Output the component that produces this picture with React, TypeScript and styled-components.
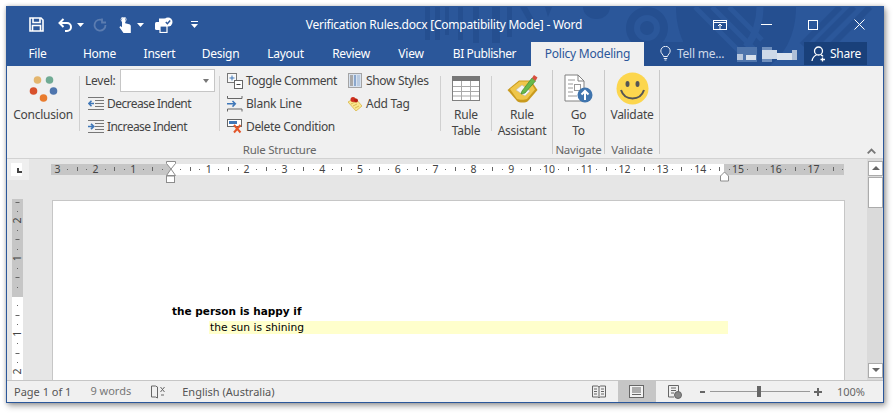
import React from "react";
import styled, { createGlobalStyle } from "styled-components";

const Global = createGlobalStyle`
  html, body { margin: 0; padding: 0; background: #fff; width: 893px; height: 413px; overflow: hidden; }
  body { font-family: "Noto Sans", "Open Sans", sans-serif; }
`;

const Window = styled.div`
  width: 878px; height: 397px; margin: 6px 0 0 6px; box-sizing: border-box;
  border: 1px solid #2b579a; display: flex; flex-direction: column; background: #f0f0f0;
  box-shadow: 2px 3px 6px rgba(0,0,0,.35), 0 0 4px rgba(0,0,0,.2); overflow: hidden;
`;
const Header = styled.header`
  position: relative; height: 59px; flex: none; background: #2b579a; color: #fff;
`;
const Pattern = styled.svg`position: absolute; left: 0; top: 0;`;
const TitleBar = styled.div`
  position: relative; height: 35px; display: grid; grid-template-columns: 1fr auto 1fr; align-items: center;
`;
const Qat = styled.div`display: flex; align-items: center; padding-left: 22px; height: 100%;`;
const QatSlot = styled.span<{ $w: number }>`width: ${p => p.$w}px; display: flex; align-items: center;`;
const Title = styled.div`font-size: 12px; letter-spacing: -.02em; color: #fff; white-space: nowrap; margin-top: -1px; position: relative; left: -1px;`;
const Controls = styled.div`display: flex; justify-content: flex-end; align-items: center; height: 100%; padding-right: 18px;`;
const ControlSlot = styled.span<{ $w: number }>`width: ${p => p.$w}px; display: flex; justify-content: flex-end;`;
const TabBar = styled.nav`position: relative; height: 24px; display: flex; align-items: stretch;`;
const Tab = styled.div<{ $w: number; $active?: boolean; $ls?: number }>`
  width: ${p => p.$w}px; flex: none; display: flex; align-items: center; justify-content: center;
  font-size: 12px; letter-spacing: ${p => p.$ls ?? -0.24}px; padding-bottom: 1px; box-sizing: border-box;
  color: ${p => (p.$active ? "#2b579a" : "#fff")}; background: ${p => (p.$active ? "#f0f0f0" : "transparent")};
`;
const TellMe = styled.div`margin-left: 16px; display: flex; align-items: center; gap: 6px; font-size: 12px; letter-spacing: -.02em; color: #ced8e8; padding-bottom: 1px;`;
const Blur = styled.svg`margin-left: 13px; align-self: center; flex: none;`;
const Share = styled.div`
  margin-left: auto; margin-right: 16px; width: 63px; height: 23px; background: #19407a; display: flex; align-items: center;
  gap: 4px; padding-left: 7px; box-sizing: border-box; font-size: 12px; letter-spacing: -.02em; color: #fff;
`;
const Ribbon = styled.section`
  position: relative; height: 93px; flex: none; background: #f0f0f0; border-bottom: 1px solid #d2d2d2; box-sizing: border-box;
  display: flex; align-items: flex-start; padding-top: 4px; color: #444; font-size: 12px; letter-spacing: -.02em;
`;
const Group = styled.div<{ $w: number }>`
  width: ${p => p.$w}px; height: 84px; flex: none; box-sizing: border-box; border-right: 1px solid #c9c9c9; display: flex; flex-direction: column;
`;
const GroupBody = styled.div`height: 74px; display: flex; flex: none;`;
const GroupLabel = styled.div`height: 12px; line-height: 12px; text-align: center; color: #666; font-size: 11.5px; white-space: nowrap;`;
const Large = styled.div<{ $w: number }>`
  width: ${p => p.$w}px; flex: none; display: flex; flex-direction: column; align-items: center; line-height: 16px; text-align: center; white-space: nowrap;
`;
const IconBox = styled.div`height: 37px; display: flex; align-items: center; justify-content: center; flex: none;`;
const Divider = styled.div`width: 1px; height: 55px; margin-top: 6px; background: #d0d0d0; flex: none;`;
const SmallCol = styled.div<{ $w: number; $ml?: number }>`width: ${p => p.$w}px; margin-left: ${p => p.$ml ?? 0}px; flex: none; display: flex; flex-direction: column; margin-top: -1px;`;
const SmallRow = styled.div<{ $gap?: number; $pl?: number; $ls?: number }>`
  height: 23px; display: flex; align-items: center; gap: ${p => p.$gap ?? 3}px; padding-left: ${p => p.$pl ?? 0}px; white-space: nowrap;
  letter-spacing: ${p => p.$ls ?? -0.24}px;
`;
const Combo = styled.div`
  width: 95px; height: 23px; box-sizing: border-box; background: #fff; border: 1px solid #c6c6c6; margin-left: 1px; position: relative;
  &::after { content: ""; position: absolute; right: 5px; top: 9px; border: 3.5px solid transparent; border-top: 4px solid #777; border-bottom: 0; }
`;
const Collapse = styled.svg`position: absolute; right: 7px; bottom: 4px;`;
const Workspace = styled.main`flex: 1; min-height: 0; display: flex; background: #e6e6e6;`;
const DocColumn = styled.div`flex: 1; min-width: 0; display: flex; flex-direction: column;`;
const RulerRow = styled.div`height: 40px; flex: none; display: flex; align-items: flex-start;`;
const Corner = styled.div`
  width: 22px; height: 21px; background: #efefef; flex: none; box-sizing: border-box; padding: 4px 0 0 4px;
`;
const CornerInner = styled.div`
  width: 11px; height: 13px; background: #fff; position: relative;
  &::after { content: ""; position: absolute; left: 6px; top: 5px; width: 3px; height: 3px; border-left: 2px solid #444; border-bottom: 2px solid #444; }
`;
const HRuler = styled.svg`margin: 2px 0 0 22px; flex: none; overflow: visible;`;
const PageRow = styled.div`flex: 1; min-height: 0; display: flex;`;
const VRuler = styled.svg`margin: 0 0 0 5px; flex: none; overflow: visible;`;
const Page = styled.article`
  margin: 1px 0 0 29px; width: 793px; flex: none; box-sizing: border-box; background: #fff; border: 1px solid #c6c6c6; border-bottom: 0;
  padding: 102px 0 0 119px; font-family: "DejaVu Sans", Verdana, sans-serif; font-size: 11px; color: #000;
`;
const Heading = styled.div`font-weight: 700; height: 17px; line-height: 17px; font-size: 10.5px;`;
const Highlight = styled.div`margin: 1px 0 0 37px; width: 519px; height: 13px; line-height: 13px; background: #ffffcc; padding-left: 1px; box-sizing: border-box; font-size: 10.7px;`;
const Scrollbar = styled.aside`
  width: 16px; flex: none; background: #dadada; display: flex; flex-direction: column; align-items: center; padding: 2px 0 2px; box-sizing: border-box;
`;
const ScrollBtn = styled.div<{ $down?: boolean }>`
  width: 15px; height: 15px; background: #fff; border: 1px solid #ababab; box-sizing: border-box; flex: none; position: relative;
  ${p => (p.$down ? "margin-top: auto;" : "")}
  &::after { content: ""; position: absolute; left: 3px; top: 4px; border: 4px solid transparent;
    ${p => (p.$down ? "border-top: 4px solid #666; border-bottom: 0;" : "border-bottom: 4px solid #666; border-top: 0;")} }
`;
const Thumb = styled.div`width: 15px; height: 31px; margin-top: 1px; background: #fff; border: 1px solid #ababab; box-sizing: border-box; flex: none;`;
const Status = styled.footer`
  height: 22px; flex: none; box-sizing: border-box; background: #f0f0f0; border-top: 1px solid #c6c6c6; display: flex; align-items: center;
  font-size: 11px; color: #555; position: relative;
`;
const StatusText = styled.span<{ $ml: number; $muted?: boolean }>`
  margin-left: ${p => p.$ml}px; white-space: nowrap; color: ${p => (p.$muted ? "#777" : "#555")}; ${p => (p.$muted ? "margin-top:-2px;" : "")}
`;
const StatusIcon = styled.svg<{ $ml: number }>`margin-left: ${p => p.$ml}px; flex: none;`;
const ViewActive = styled.div`margin-left: 12px; width: 38px; height: 21px; background: #c6c6c6; display: flex; align-items: center; justify-content: center; flex: none;`;
const Zoom = styled.div`margin-left: 18px; display: flex; align-items: center; flex: none;`;
const Track = styled.div`width: 100px; height: 1px; background: #999; margin: 0 4px 0 5px; position: relative;`;
const Knob = styled.div`position: absolute; left: 47px; top: -5px; width: 4px; height: 11px; background: #666;`;
const Percent = styled.span`margin-left: auto; margin-right: 18px; color: #666;`;

const W = "#fff";
const SaveIcon = () => (
  <svg width="15" height="15" viewBox="0 0 15 15" fill="none" stroke={W} strokeWidth="1.6">
    <path d="M1 1h11l2 2v11H1z" /><path d="M4 1v4.5h7V1" /><path d="M3.5 14V8.5h8V14" />
  </svg>
);
const UndoIcon = () => (
  <svg width="15" height="14" viewBox="0 0 15 14" fill="none" stroke={W} strokeWidth="2">
    <path d="M5.5 1 1.5 5l4 4" /><path d="M2 5h7a4 4 0 0 1 4 4v0a4 4 0 0 1-4 4H7" />
  </svg>
);
const RedoIcon = () => (
  <svg width="14" height="14" viewBox="0 0 14 14" fill="none" stroke="#5b7cb0" strokeWidth="1.8">
    <path d="M9.5 2.2A5.5 5.5 0 1 0 12.5 7" /><path d="M9 .5v4h4" />
  </svg>
);
const TouchIcon = () => (
  <svg width="12" height="16" viewBox="0 0 12 16" fill={W}>
    <path d="M3 2a1.6 1.6 0 0 1 3.2 0v4.2l4 1.1c1 .3 1.6 1 1.6 2V16H4.5L.4 10.2l1-1.1L3 10.300z" />
    <circle cx="4.600" cy="2.500" r="2.500" fill="none" stroke={W} strokeWidth=".8" />
  </svg>
);
const Caret = () => (
  <svg width="7" height="4" viewBox="0 0 7 4"><path d="M0 0h7L3.500 4z" fill={W} /></svg>
);
const PrintCheck = () => (
  <svg width="18" height="16" viewBox="0 0 18 16">
    <rect x="0" y="5" width="12" height="8" rx="1.500" fill={W} />
    <rect x="5" y="9" width="7" height="6.500" fill="#2b579a" stroke={W} strokeWidth="1.200" />
    <rect x="4" y="1.500" width="6" height="4" fill={W} />
    <circle cx="13" cy="5" r="4.500" fill={W} />
    <path d="M10.800 5l1.600 1.700 2.800-3.200" stroke="#2b579a" strokeWidth="1.400" fill="none" />
  </svg>
);
const Customize = () => (
  <svg width="7" height="7" viewBox="0 0 7 7"><path d="M0 .5h7" stroke={W} /><path d="M0 3h7L3.500 7z" fill={W} /></svg>
);
const Restore = () => (
  <svg width="14" height="10" viewBox="0 0 14 10" fill="none" stroke={W}>
    <rect x=".5" y=".5" width="13" height="9" /><path d="M1 2.500h12" /><path d="M7 9V4M5 6l2-2 2 2" />
  </svg>
);
const Minimize = () => (<svg width="11" height="1" viewBox="0 0 11 1"><rect width="11" height="1" fill={W} /></svg>);
const Maximize = () => (<svg width="10" height="10" viewBox="0 0 10 10" fill="none" stroke={W}><rect x=".5" y=".5" width="9" height="9" /></svg>);
const Close = () => (<svg width="11" height="11" viewBox="0 0 11 11" stroke={W} fill="none"><path d="M.5.5l10 10M10.500.5l-10 10" /></svg>);
const Bulb = () => (
  <svg width="11" height="15" viewBox="0 0 11 15" fill="none" stroke="#e8edf5" strokeWidth="1">
    <path d="M3.500 10.500C3.300 8.500.8 7.500.8 5a4.700 4.700 0 0 1 9.400 0c0 2.500-2.500 3.500-2.700 5.500z" />
    <path d="M3.800 12.500h3.400M4.500 14h2" />
  </svg>
);
const ShareIcon = () => (
  <svg width="15" height="16" viewBox="0 0 15 16" fill="none" stroke={W} strokeWidth="1.300">
    <circle cx="7.500" cy="5" r="4" /><path d="M1 15c.5-3 2-5 4.500-6M10 8.800c.8.400 1.500.9 2 1.600" />
    <path d="M11.500 11.500v4M9.500 13.500h4.500" />
  </svg>
);
const ConclusionIcon = () => (
  <svg width="30" height="26" viewBox="0 0 30 26">
    <circle cx="9.500" cy="4" r="3.800" fill="#e4b66e" />
    <circle cx="21.500" cy="4" r="3.800" fill="#70ab94" />
    <circle cx="5.500" cy="15" r="3.800" fill="#d8512c" />
    <circle cx="25.500" cy="15" r="3.800" fill="#4f76ae" />
    <circle cx="15.500" cy="22" r="3.800" fill="#e97c2e" />
  </svg>
);
const IndentIcon = ({ right }: { right?: boolean }) => (
  <svg width="16" height="13" viewBox="0 0 16 13" fill="none">
    <path d="M0 .5h16M7 3.500h9M7 6.500h9M7 9.500h9M0 12.500h16" stroke="#777" />
    {right
      ? <path d="M0 6.500h5M3 3.800l2.800 2.700L3 9.200" stroke="#3f77b8" strokeWidth="1.600" />
      : <path d="M6 6.500H1M3.500 3.800.8 6.500l2.700 2.700" stroke="#3f77b8" strokeWidth="1.600" />}
  </svg>
);
const ToggleIcon = () => (
  <svg width="16" height="16" viewBox="0 0 16 16" fill="none">
    <rect x=".5" y=".5" width="9" height="9" stroke="#777" fill="#f8f8f8" />
    <path d="M5 2.500v5M2.500 5h5" stroke="#3f77b8" />
    <rect x="7.500" y="7.500" width="8" height="8" stroke="#666" fill="#fff" />
    <path d="M9.500 11.500h4" stroke="#444" />
  </svg>
);
const BlankIcon = () => (
  <svg width="16" height="16" viewBox="0 0 16 16" fill="none">
    <path d="M.5 0v2.500h14.500V0M.5 15.500v-2.500H15v2.500" stroke="#666" />
    <path d="M0 7.800h8M5.500 5 8.300 7.800 5.500 10.600" stroke="#3f77b8" strokeWidth="1.500" />
  </svg>
);
const DeleteIcon = () => (
  <svg width="16" height="15" viewBox="0 0 16 15" fill="none">
    <rect x=".5" y=".5" width="14" height="7" stroke="#666" fill="#fff" />
    <rect x="2" y="2" width="8" height="3" fill="#3f77b8" />
    <path d="M7 6l6.500 7.500M13.500 6 7 13.500" stroke="#e2562a" strokeWidth="2" />
  </svg>
);
const StylesIcon = () => (
  <svg width="14" height="15" viewBox="0 0 14 15">
    <rect x=".5" y=".5" width="13" height="14" fill="#d8e2ee" stroke="#a4a4a4" />
    <rect x="2" y="2" width="3" height="11" fill="#a8a8a8" />
    <rect x="6" y="2" width="2" height="11" fill="#8aa7cc" />
    <rect x="9" y="2" width="3" height="11" fill="#b9cbe1" />
  </svg>
);
const TagIcon = () => (
  <svg width="14" height="15" viewBox="0 0 14 15">
    <path d="M0 6 7 2l7 8-6 5z" fill="#fbe88f" stroke="#d9b64a" strokeWidth=".8" />
    <path d="M3 8l4-2M5 10l4-2M7 12l4-2" stroke="#caa53a" strokeWidth=".7" />
    <circle cx="5" cy="3.500" r="2.500" fill="#cf2f1f" />
    <circle cx="8" cy="4.500" r="2" fill="#b51f12" />
  </svg>
);
const TableIcon = () => (
  <svg width="28" height="25" viewBox="0 0 28 25" fill="none">
    <rect x=".5" y=".5" width="27" height="24" stroke="#808080" fill="#fff" />
    <rect width="28" height="5" fill="#777" />
    <path d="M9.500 5v19M18.500 5v19M1 10.500h26M1 15.500h26M1 20h26" stroke="#a9a9a9" />
  </svg>
);
const AssistantIcon = () => (
  <svg width="31" height="31" viewBox="0 0 31 31">
    <path d="M.5 17 12 7.500h12L30.500 17 21 28c-2 2-9 2-11 0z" fill="#c99a1e" />
    <path d="M3 16 12.500 8.500h10.500l5 8-8 9.500c-2 1-8 1-10 0z" fill="#efc64a" />
    <path d="M9 17l6-5 8 6-5 5z" fill="#f5f5f5" stroke="#b9b9b9" strokeWidth=".6" />
    <path d="M15 18 25 5l3.500 3L18 20l-4 1z" fill="#68b94a" stroke="#3e8a2e" strokeWidth=".7" />
    <path d="M25 5l2-3 3.500 2.500-2 3.500z" fill="#d8503f" />
  </svg>
);
const GoToIcon = () => (
  <svg width="29" height="29" viewBox="0 0 29 29" fill="none">
    <path d="M1 1h13l6 6v20H1z" fill="#fff" stroke="#808080" />
    <path d="M14 1v6h6" stroke="#808080" />
    <path d="M4 6h7M4 10h5M4 14h5M4 18h5M4 22h9" stroke="#9a9a9a" />
    <rect x="10.500" y="10.500" width="6" height="6" stroke="#999" />
    <circle cx="21" cy="21" r="7.500" fill="#3f74ad" />
    <path d="M21 26v-9M17.500 20.500 21 17l3.500 3.500" stroke="#fff" strokeWidth="2" />
  </svg>
);
const Smile = () => (
  <svg width="33" height="33" viewBox="0 0 33 33">
    <circle cx="16.500" cy="16.500" r="16" fill="#fcd64e" />
    <ellipse cx="11.500" cy="12" rx="2" ry="3" fill="#555" />
    <ellipse cx="21.500" cy="12" rx="2" ry="3" fill="#555" />
    <path d="M5 18c2 6 6.500 8.500 11.500 8.500S26 24 28 18" stroke="#555" strokeWidth="2" fill="none" />
  </svg>
);

const ticksH: React.ReactNode[] = [];
const hx = (u: number) => 171 - 51 + u * 37.8;
for (let u = -3; u <= 17; u++) {
  if (u !== 0) {
    ticksH.push(<text key={"n" + u} x={hx(u)} y={12} textAnchor="middle" fontSize="10.500" fontFamily="Noto Sans, sans-serif" fill="#444">{Math.abs(u)}</text>);
  }
  [0.25, 0.5, 0.75].forEach(f => {
    const x = hx(u + f);
    if (x > 793) return;
    ticksH.push(f === 0.5
      ? <rect key={"t" + u + f} x={Math.round(x)} y={6} width={1} height={4} fill="#666" />
      : <rect key={"t" + u + f} x={Math.round(x)} y={8} width={1} height={1} fill="#666" />);
  });
}
const ticksV: React.ReactNode[] = [];
const vy = (u: number) => 296 - 199 + u * 37.8;
for (let u = -3; u <= 2; u++) {
  if (u !== 0 && u !== -3) {
    const y = vy(u);
    ticksV.push(<text key={"n" + u} transform={`rotate(-90 5.500 ${y})`} x={5.5} y={y + 3.500} textAnchor="middle" fontSize="10.500" fontFamily="Noto Sans, sans-serif" fill="#444">{Math.abs(u)}</text>);
  }
  [0.25, 0.5, 0.75].forEach(f => {
    const y = vy(u + f);
    if (y < 0 || y > 181) return;
    ticksV.push(f === 0.5
      ? <rect key={"t" + u + f} x={3.500} y={Math.round(y)} width={4} height={1} fill="#666" />
      : <rect key={"t" + u + f} x={5} y={Math.round(y)} width={1} height={1} fill="#666" />);
  });
}

export default function App() {
  return (
    <>
      <Global />
      <Window>
        <Header>
          <Pattern width="876" height="59" viewBox="7 7 876 59" fill="#254f90">
            <rect x="425" y="7" width="5" height="33" /><rect x="435" y="7" width="5" height="33" />
            <rect x="445" y="7" width="4" height="28" /><rect x="458" y="7" width="5" height="33" />
            <rect x="473" y="7" width="6" height="36" /><rect x="492" y="7" width="8" height="36" />
            <rect x="507" y="7" width="5" height="30" /><path d="M520 7h7l10 18-5 3z" /><path d="M545 7h7l-4 10z" />
            <path d="M583 7h27a13.500 12 0 0 1-27 0z" />
            <circle cx="647" cy="28" r="17" fill="none" stroke="#254f90" strokeWidth="8" /><circle cx="647" cy="28" r="7" />
            <path d="M676 7h120c0 45-30 70-60 70s-60-25-60-70z" />
            <path d="M695 7l52 52M712 7l44 44M729 7l33 33" stroke="#2b579a" strokeWidth="5" fill="none" />
            <path d="M760 7c0 17-6 30-14 40" stroke="#2b579a" strokeWidth="7" fill="none" />
            <path d="M802 45l38-38M816 45l38-38M832 45l38-38" stroke="#254f90" strokeWidth="6" fill="none" />
            <rect x="644" y="42" width="81" height="24" />
          </Pattern>
          <TitleBar>
            <Qat>
              <QatSlot $w={29}><SaveIcon /></QatSlot>
              <QatSlot $w={19}><UndoIcon /></QatSlot>
              <QatSlot $w={16}><Caret /></QatSlot>
              <QatSlot $w={26}><RedoIcon /></QatSlot>
              <QatSlot $w={18}><TouchIcon /></QatSlot>
              <QatSlot $w={18}><Caret /></QatSlot>
              <QatSlot $w={36}><PrintCheck /></QatSlot>
              <QatSlot $w={10}><Customize /></QatSlot>
            </Qat>
            <Title>Verification Rules.docx [Compatibility Mode] - Word</Title>
            <Controls>
              <ControlSlot $w={14}><Restore /></ControlSlot>
              <ControlSlot $w={45}><Minimize /></ControlSlot>
              <ControlSlot $w={46}><Maximize /></ControlSlot>
              <ControlSlot $w={47}><Close /></ControlSlot>
            </Controls>
          </TitleBar>
          <TabBar>
            <Tab $w={61}>File</Tab>
            <Tab $w={63}>Home</Tab>
            <Tab $w={57}>Insert</Tab>
            <Tab $w={65}>Design</Tab>
            <Tab $w={65}>Layout</Tab>
            <Tab $w={66}>Review</Tab>
            <Tab $w={54}>View</Tab>
            <Tab $w={93} $ls={-0.4}>BI Publisher</Tab>
            <Tab $w={113} $active>Policy Modeling</Tab>
            <TellMe><Bulb />Tell me...</TellMe>
            <Blur width="60" height="15" viewBox="0 0 60 15">
              <rect x="0" y="0" width="20" height="15" fill="#4f75ac" />
              <rect x="25" y="0" width="10" height="15" fill="#6f8fbd" />
              <rect x="0" y="7" width="6" height="6" fill="#b8c7dd" /><rect x="9" y="8" width="10" height="5" fill="#d9e1ec" />
              <rect x="25" y="3" width="15" height="9" fill="#ced9e8" /><rect x="40" y="6" width="16" height="7" fill="#dbe3ee" />
              <rect x="55" y="3" width="5" height="10" fill="#aebfd8" />
            </Blur>
            <Share><ShareIcon />Share</Share>
          </TabBar>
        </Header>
        <Ribbon>
          <Group $w={546}>
            <GroupBody>
              <Large $w={72}><IconBox><ConclusionIcon /></IconBox>Conclusion</Large>
              <Divider />
              <SmallCol $w={134} $ml={5}>
                <SmallRow $gap={3}>Level:<Combo /></SmallRow>
                <SmallRow $pl={3} $ls={-0.57}><IndentIcon />Decrease Indent</SmallRow>
                <SmallRow $pl={3} $ls={-0.57}><IndentIcon right />Increase Indent</SmallRow>
              </SmallCol>
              <Divider />
              <SmallCol $w={121} $ml={7}>
                <SmallRow $ls={-0.4}><ToggleIcon />Toggle Comment</SmallRow>
                <SmallRow><BlankIcon />Blank Line</SmallRow>
                <SmallRow $ls={-0.35}><DeleteIcon />Delete Condition</SmallRow>
              </SmallCol>
              <SmallCol $w={92}>
                <SmallRow $gap={4} $ls={-0.32}><StylesIcon />Show Styles</SmallRow>
                <SmallRow $gap={4}><TagIcon />Add Tag</SmallRow>
              </SmallCol>
              <Divider />
              <Large $w={50}><IconBox><TableIcon /></IconBox>Rule<br />Table</Large>
              <Divider />
              <Large $w={60}><IconBox><AssistantIcon /></IconBox>Rule<br />Assistant</Large>
            </GroupBody>
            <GroupLabel>Rule Structure</GroupLabel>
          </Group>
          <Group $w={52}>
            <GroupBody>
              <Large $w={51}><IconBox><GoToIcon /></IconBox>Go<br />To</Large>
            </GroupBody>
            <GroupLabel>Navigate</GroupLabel>
          </Group>
          <Group $w={55}>
            <GroupBody>
              <Large $w={54}><IconBox><Smile /></IconBox>Validate</Large>
            </GroupBody>
            <GroupLabel>Validate</GroupLabel>
          </Group>
          <Collapse width="9" height="6" viewBox="0 0 9 6" fill="none" stroke="#777" strokeWidth="1.800"><path d="M.7 5.300 4.500 1.500l3.800 3.800" /></Collapse>
        </Ribbon>
        <Workspace>
          <DocColumn>
            <RulerRow>
              <Corner><CornerInner /></Corner>
              <HRuler width="793" height="22" viewBox="0 0 793 22">
                <rect x="0" y="3" width="793" height="11" fill="#c6c6c6" />
                <rect x="120" y="3" width="553" height="11" fill="#fff" />
                {ticksH}
                <path d="M115.500.5h9v2L120 8 115.500 2.500zM120 8l4.500 6.500h-9z" fill="#fff" stroke="#8c8c8c" />
                <rect x="115.500" y="15" width="8" height="6.500" fill="#fff" stroke="#8c8c8c" />
                <path d="M669.500 15l4-4 4 4v5h-8z" fill="#fff" stroke="#8c8c8c" />
              </HRuler>
            </RulerRow>
            <PageRow>
              <VRuler width="11" height="181" viewBox="0 0 11 181">
                <rect width="11" height="98" fill="#c6c6c6" />
                <rect y="98" width="11" height="83" fill="#fff" />
                {ticksV}
              </VRuler>
              <Page>
                <Heading>the person is happy if</Heading>
                <Highlight>the sun is shining</Highlight>
              </Page>
            </PageRow>
          </DocColumn>
          <Scrollbar>
            <ScrollBtn />
            <Thumb />
            <ScrollBtn $down />
          </Scrollbar>
        </Workspace>
        <Status>
          <StatusText $ml={7}>Page 1 of 1</StatusText>
          <StatusText $ml={19} $muted>9 words</StatusText>
          <StatusIcon $ml={20} width="15" height="14" viewBox="0 0 15 14" fill="none" stroke="#666"><path d="M.5 1h4l2 1v11l-2-1h-4zM6.500 2v11" /><path d="M9.500 2 13.500 7M13.500 2 9.500 7M10 10h3" /></StatusIcon>
          <StatusText $ml={16}>English (Australia)</StatusText>
          <StatusIcon $ml={317} width="14" height="13" viewBox="0 0 14 13" fill="none" stroke="#666"><path d="M.5 1h5l1.500 1 1.500-1h5v11h-5L7 13l-1.500-1h-5zM7 2v11M2 4h3M2 6.500h3M2 9h3M9 4h3M9 6.500h3M9 9h3" /></StatusIcon>
          <ViewActive>
            <svg width="15" height="13" viewBox="0 0 15 13" fill="#f2f2f2" stroke="#666"><rect x=".5" y=".5" width="14" height="12" /><path d="M3 3h9M3 5h9M3 7h9M3 9.500h9" /></svg>
          </ViewActive>
          <StatusIcon $ml={12} width="14" height="14" viewBox="0 0 14 14" fill="none" stroke="#666"><path d="M.5.5h10v8M.5.500V12H6M3 3h5M3 5.500h5M3 8h3" /><circle cx="10" cy="10" r="3.500" fill="#888" stroke="#666" /></StatusIcon>
          <Zoom>
            <svg width="5" height="2" viewBox="0 0 5 2"><rect width="5" height="2" fill="#666" /></svg>
            <Track><Knob /></Track>
            <svg width="8" height="8" viewBox="0 0 8 8"><path d="M0 3h8v2H0zM3 0h2v8H3z" fill="#666" /></svg>
          </Zoom>
          <Percent>100%</Percent>
        </Status>
      </Window>
    </>
  );
}
